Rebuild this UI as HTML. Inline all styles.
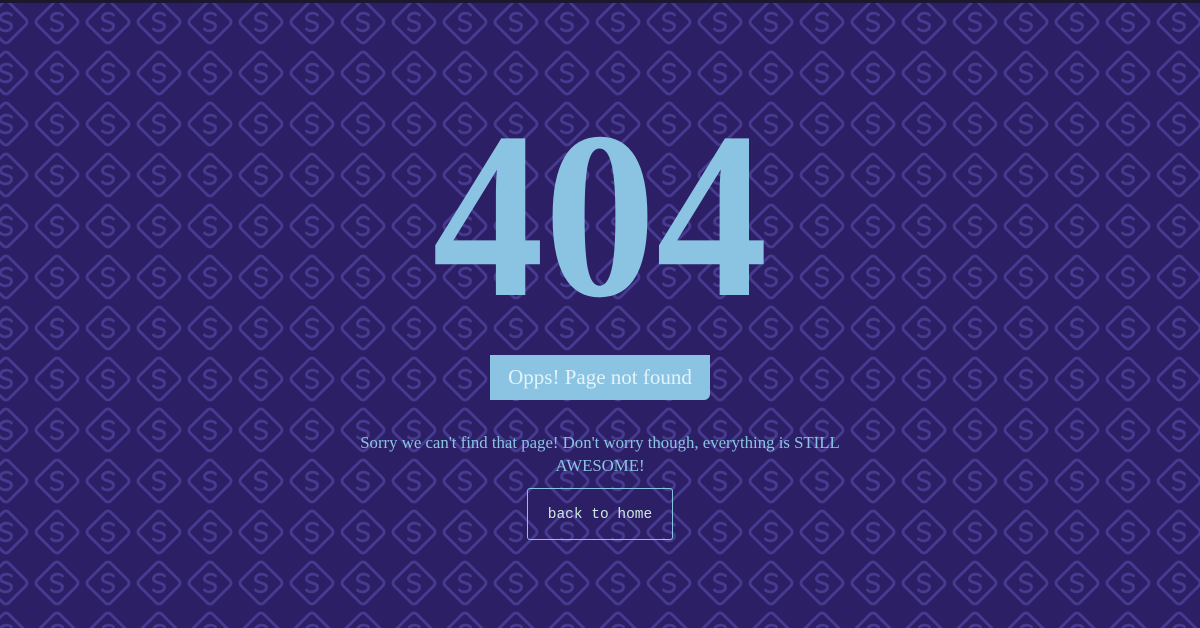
<!DOCTYPE html>
<html><head><style>
html,body{margin:0;padding:0;width:1200px;height:628px;overflow:hidden;background:#2d1f66;}
.bar{position:absolute;left:0;top:0;width:1200px;height:3px;background:#1c1830;}
svg.bg{position:absolute;left:0;top:0;}
.n{position:absolute;left:0;top:97px;width:1200px;text-align:center;font-family:"Liberation Serif",serif;font-weight:bold;font-size:238px;line-height:238px;color:#8ac4e2;transform:scaleX(0.94);}
.lab{position:absolute;left:490px;top:355px;width:220px;height:45px;background:#8ac4e2;border-radius:0 0 6px 0;color:#e3f3fb;font-family:"Liberation Serif",serif;font-size:21px;line-height:45px;text-align:center;}
.p{position:absolute;left:340px;top:431px;width:520px;text-align:center;font-family:"Liberation Serif",serif;font-size:16.8px;line-height:23px;color:#8ac4e2;}
.btn{position:absolute;left:527px;top:488px;width:144px;height:50px;border:1px solid #8ac4e2;border-radius:3px;color:#cde8e2;font-family:"Liberation Mono",monospace;font-size:14.5px;line-height:52px;text-align:center;}
</style></head><body>
<svg class="bg" width="1200" height="628">
<defs><pattern id="p" patternUnits="userSpaceOnUse" x="-19.5" y="-3.5" width="51" height="51">
<g fill="none" stroke="#463b90" stroke-width="2.8" stroke-linecap="round">
<rect x="9.5" y="9.5" width="32" height="32" rx="4" transform="rotate(45 25.5 25.5)"/>
<path d="M31 18.5 C28.5 15.5 20 16 20 21.5 C20 26 31 24.5 31 29.5 C31 35 22.5 35.5 20 32.5"/>
</g></pattern></defs>
<rect width="1200" height="628" fill="url(#p)"/>
</svg>
<div class="bar"></div>
<div class="n">404</div>
<div class="lab">Opps! Page not found</div>
<div class="p">Sorry we can't find that page! Don't worry though, everything is STILL AWESOME!</div>
<div class="btn">back to home</div>
</body></html>
